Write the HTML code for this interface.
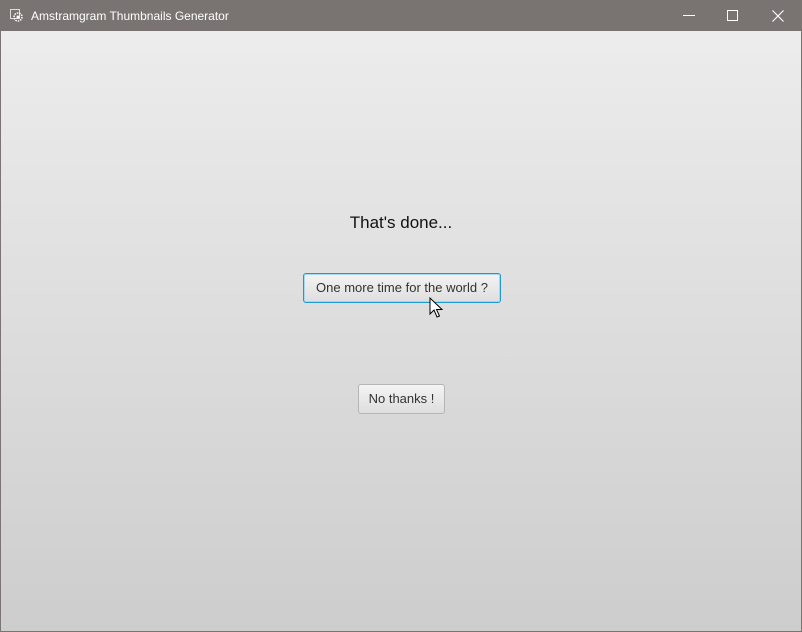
<!DOCTYPE html>
<html><head><meta charset="utf-8"><style>
html,body{margin:0;padding:0;width:802px;height:632px;overflow:hidden;font-family:"Segoe UI","Liberation Sans",sans-serif;}
.win{position:absolute;left:0;top:0;width:800px;height:630px;border:1px solid #7a7573;background:linear-gradient(#eeeeee,#cdcdcd);}
.tb{position:absolute;left:0;top:0;width:800px;height:30px;background:#797472;color:#fff;font-size:12px;}
.tb .t{position:absolute;left:30px;top:8px;}
.ic{position:absolute;left:9px;top:8px;width:14px;height:14px;}
.btn{position:absolute;box-sizing:border-box;background:linear-gradient(#f4f4f4,#dedede);border:1px solid #b5b5b5;border-radius:3px;font-size:13px;color:#333;text-align:center;}
h1{position:absolute;left:0;width:800px;top:212px;margin:0;font-weight:normal;font-size:17px;text-align:center;color:#111;}
</style></head><body>
<div class="win">
<div class="tb">
<svg class="ic" viewBox="0 0 14 14"><rect x="0.5" y="0.5" width="9" height="9" fill="none" stroke="#ddd"/><circle cx="8" cy="8" r="4" fill="none" stroke="#fff" stroke-width="1.5" stroke-dasharray="1.5 1"/><circle cx="8" cy="8" r="1.5" fill="#fff"/></svg>
<span class="t">Amstramgram Thumbnails Generator</span>
<svg style="position:absolute;left:682px;top:14px" width="12" height="2"><rect width="12" height="1" fill="#fff"/></svg>
<svg style="position:absolute;left:726px;top:9px" width="11" height="11"><rect x="0.5" y="0.5" width="10" height="10" fill="none" stroke="#fff"/></svg>
<svg style="position:absolute;left:771px;top:9px" width="12" height="12"><path d="M0.5 0.5L11.5 11.5M11.5 0.5L0.5 11.5" stroke="#fff" stroke-width="1.2"/></svg>
</div>
<h1>That's done...</h1>
<div class="btn" style="left:302px;top:272px;width:198px;height:30px;line-height:28px;border:1px solid #1d9ad6;box-shadow:inset 0 0 0 1px #a8d8ef;">One more time for the world ?</div>
<div class="btn" style="left:357px;top:383px;width:87px;height:30px;line-height:28px;">No thanks !</div>
<svg style="position:absolute;left:428px;top:296px" width="14" height="22" viewBox="0 0 14 22"><path d="M1 1V17L5 13L8 20L10.5 19L7.5 12.5H13Z" fill="#fff" stroke="#000" stroke-width="1"/></svg>
</div>
</body></html>
